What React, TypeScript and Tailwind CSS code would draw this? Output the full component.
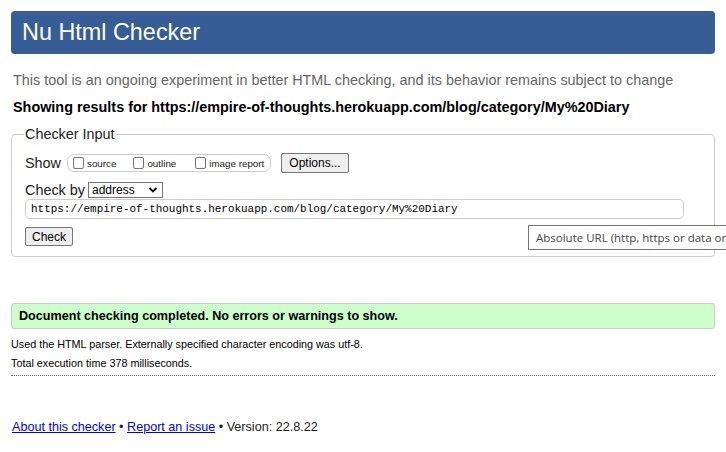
export default function App() {
  return (
    <div className="min-h-[452px] bg-white px-[11px] pt-[11px] text-[#222] font-['Liberation_Sans',Arial,sans-serif]">
      <h1 className="h-[43px] rounded-[4px] bg-[#365d95] pl-[11px] flex items-center text-[23.4px] text-white font-normal">
        Nu Html Checker
      </h1>
      <p className="mt-[17px] pl-[2px] text-[14.4px] leading-[18px] text-[#666]">
        This tool is an ongoing experiment in better HTML checking, and its behavior remains subject to change
      </p>
      <p className="mt-[10px] pl-[2px] text-[14.4px] leading-[17px] font-bold text-black">
        Showing results for https://empire-of-thoughts.herokuapp.com/blog/category/My%20Diary
      </p>

      <div className="relative">
        <fieldset className="mt-[9px] rounded-[4px] border border-[#ccc] px-[13px] pt-[10px] pb-[10px]">
          <legend className="ml-[-1px] px-[1px] text-[14.4px] leading-[18px] text-[#222]">Checker Input</legend>

          <div className="flex items-center h-[20px]">
            <span className="text-[14.4px] leading-[18px]">Show</span>
            <div className="ml-[6px] flex items-center h-[18px] w-[204px] rounded-[7px] border border-[#ccc]">
              <Check label="source" className="ml-[5px]" />
              <Check label="outline" className="ml-[17px]" />
              <Check label="image report" className="ml-[19px]" />
            </div>
            <button className="ml-[10px] h-[20px] w-[68px] rounded-[2px] border border-[#767676] bg-[#efefef] text-[12px] leading-[14px] text-black">
              Options...
            </button>
          </div>

          <div className="mt-[9px] flex items-center h-[16px]">
            <span className="text-[14.4px] leading-[16px]">Check by</span>
            <div className="ml-[3px] flex items-center h-[16px] w-[75px] border border-[#767676] pl-[3px] text-[12px] leading-[14px] text-black">
              <span className="flex-1">address</span>
              <svg width="10" height="10" viewBox="0 0 10 10" className="mr-[4px]">
                <path d="M1.5 3 L5 6.5 L8.5 3" fill="none" stroke="#000" strokeWidth="1.8" />
              </svg>
            </div>
          </div>

          <div className="mt-[1px] h-[20px] w-[659px] rounded-[5px] border border-[#ccc] pl-[5px] flex items-center font-['Liberation_Mono','DejaVu_Sans_Mono',monospace] text-[10.95px] text-black">
            https://empire-of-thoughts.herokuapp.com/blog/category/My%20Diary
          </div>

          <button className="mt-[8px] block h-[19px] w-[48px] rounded-[2px] border border-[#767676] bg-[#efefef] text-[12px] leading-[14px] text-black">
            Check
          </button>
        </fieldset>

        <div className="absolute left-[517px] top-[100px] h-[25px] w-[220px] border border-[#767676] bg-white pl-[7px] flex items-center font-['Open_Sans','Noto_Sans',sans-serif] text-[11.5px] text-[#444] whitespace-nowrap overflow-hidden">
          Absolute URL (http, https or data only)
        </div>
      </div>

      <div className="mt-[46px] h-[26px] rounded-[3px] border border-[#ccc] bg-[#ccffcc] pl-[7px] flex items-center text-[12.6px] font-bold text-black">
        Document checking completed. No errors or warnings to show.
      </div>
      <p className="mt-[9px] text-[10.8px] leading-[13px] text-black">
        Used the HTML parser. Externally specified character encoding was utf-8.
      </p>
      <p className="mt-[6px] text-[10.8px] leading-[13px] text-black">Total execution time 378 milliseconds.</p>
      <div className="mt-[5px] border-t border-dotted border-[#666]" />

      <p className="mt-[44px] pl-[1px] text-[12.6px] leading-[15px] text-[#222]">
        <a href="#" className="text-[#0000ee] underline">About this checker</a> •{' '}
        <a href="#" className="text-[#0000ee] underline">Report an issue</a> • Version: 22.8.22
      </p>
    </div>
  );
}

function Check({ label, className }: { label: string; className: string }) {
  return (
    <span className={`flex items-end whitespace-nowrap ${className}`}>
      <span className="h-[12px] w-[11px] rounded-[2px] border border-[#767676] bg-white" />
      <span className="ml-[3px] text-[9.8px] leading-[10px] text-[#222]">{label}</span>
    </span>
  );
}
